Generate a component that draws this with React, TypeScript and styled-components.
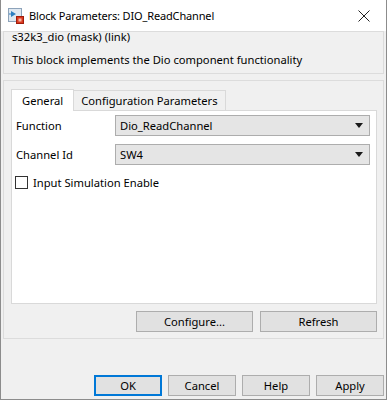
import React from 'react';
import styled, { createGlobalStyle } from 'styled-components';

const Global = createGlobalStyle`
  html, body {
    margin: 0;
    padding: 0;
    background: #ffffff;
  }
  body {
    font-family: "Noto Sans", "Open Sans", sans-serif;
    font-size: 11.2px;
    color: #000;
  }
`;

const Window = styled.div`
  box-sizing: border-box;
  width: 387px;
  height: 400px;
  display: flex;
  flex-direction: column;
  border: 1px solid #8c8c8c;
  border-top: none;
  background: #f0f0f0;
`;

const TitleBar = styled.div`
  height: 31px;
  flex: none;
  display: flex;
  align-items: center;
  background: #ffffff;
  padding-left: 7px;
  .title {
    margin-left: 5px;
    flex: 1;
    white-space: nowrap;
    font-size: 11px;
    letter-spacing: -0.15px;
  }
`;

const CloseBox = styled.div`
  width: 44px;
  height: 31px;
  display: flex;
  align-items: center;
  justify-content: center;
`;

const Content = styled.div`
  flex: 1;
  display: flex;
  flex-direction: column;
  padding: 0 2px;
`;

const DescGroup = styled.div`
  border: 1px solid #dcdcdc;
  padding: 0 8px 6px;
  .name {
    line-height: 14px;
    margin-top: -2px;
  }
  .desc {
    line-height: 14px;
    margin-top: 9px;
  }
`;

const ParamGroup = styled.div`
  margin-top: 6px;
  border: 1px solid #dcdcdc;
  padding: 8px 6px 6px 7px;
`;

const TabStrip = styled.div`
  display: flex;
  align-items: flex-end;
  height: 21px;
`;

const Tab = styled.div<{ $active?: boolean }>`
  box-sizing: border-box;
  height: ${(p) => (p.$active ? 22 : 20)}px;
  padding: 0 ${(p) => (p.$active ? 10 : 7)}px;
  display: flex;
  align-items: center;
  border: 1px solid #d9d9d9;
  border-bottom: none;
  background: ${(p) => (p.$active ? '#ffffff' : '#f0f0f0')};
  margin-bottom: ${(p) => (p.$active ? -1 : 0)}px;
  position: relative;
  z-index: ${(p) => (p.$active ? 1 : 0)};
  white-space: nowrap;
  & + & {
    margin-left: -1px;
  }
`;

const Panel = styled.div`
  box-sizing: border-box;
  height: 194px;
  border: 1px solid #d9d9d9;
  background: #ffffff;
  padding: 4px 6px 0 4px;
`;

const FieldGrid = styled.div`
  display: grid;
  grid-template-columns: 99px 1fr;
  row-gap: 8px;
  align-items: center;
`;

const Dropdown = styled.div`
  box-sizing: border-box;
  height: 21px;
  display: flex;
  align-items: center;
  padding: 0 6px 0 4px;
  border: 1px solid #adadad;
  background: #e5e5e5;
  .value {
    flex: 1;
  }
`;

const Caret = styled.span`
  width: 0;
  height: 0;
  border-left: 4px solid transparent;
  border-right: 4px solid transparent;
  border-top: 5px solid #1a1a1a;
`;

const CheckRow = styled.label`
  display: flex;
  align-items: center;
  gap: 5px;
  margin-top: 10px;
  margin-left: -1px;
`;

const CheckBox = styled.span`
  box-sizing: border-box;
  width: 13px;
  height: 13px;
  border: 1px solid #333333;
  background: #ffffff;
`;

const ButtonRow = styled.div<{ $gap: number }>`
  display: flex;
  justify-content: flex-end;
  gap: ${(p) => p.$gap}px;
`;

const Button = styled.div<{ $width: number; $focused?: boolean }>`
  box-sizing: border-box;
  width: ${(p) => p.$width}px;
  height: 21px;
  display: flex;
  align-items: center;
  justify-content: center;
  background: #e1e1e1;
  border: ${(p) => (p.$focused ? '2px solid #0078d7' : '1px solid #adadad')};
`;

const InnerButtons = styled(ButtonRow)`
  margin-top: 7px;
`;

const Footer = styled(ButtonRow)`
  flex: 1;
  align-items: flex-end;
  padding-bottom: 3px;
`;

function BlockIcon() {
  return (
    <svg width="16" height="16" viewBox="0 0 16 16">
      <rect x="0.5" y="0.5" width="13" height="13" fill="#dfe8f1" stroke="#8da3ba" />
      <path d="M3 3 L8 6 L3 9 Z" fill="#2d7fc1" />
      <path d="M1 6 H3" stroke="#2d7fc1" strokeWidth="1.2" />
      <rect x="8.5" y="8.5" width="7" height="7" fill="#d9381e" stroke="#a01d0c" />
      <rect x="10.5" y="10.5" width="3" height="3" fill="#f5b7a8" />
    </svg>
  );
}

function CloseIcon() {
  return (
    <svg width="12" height="12" viewBox="0 0 12 12">
      <path d="M0.5 0.5 L11.5 11.5 M11.5 0.5 L0.5 11.5" stroke="#222" strokeWidth="1" />
    </svg>
  );
}

export default function App() {
  return (
    <>
      <Global />
      <Window>
        <TitleBar>
          <BlockIcon />
          <span className="title">Block Parameters: DIO_ReadChannel</span>
          <CloseBox>
            <CloseIcon />
          </CloseBox>
        </TitleBar>
        <Content>
          <DescGroup>
            <div className="name">s32k3_dio (mask) (link)</div>
            <div className="desc">This block implements the Dio component functionality</div>
          </DescGroup>
          <ParamGroup>
            <TabStrip>
              <Tab $active>General</Tab>
              <Tab>Configuration Parameters</Tab>
            </TabStrip>
            <Panel>
              <FieldGrid>
                <span>Function</span>
                <Dropdown>
                  <span className="value">Dio_ReadChannel</span>
                  <Caret />
                </Dropdown>
                <span>Channel Id</span>
                <Dropdown>
                  <span className="value">SW4</span>
                  <Caret />
                </Dropdown>
              </FieldGrid>
              <CheckRow>
                <CheckBox />
                <span>Input Simulation Enable</span>
              </CheckRow>
            </Panel>
            <InnerButtons $gap={7}>
              <Button $width={117}>Configure...</Button>
              <Button $width={117}>Refresh</Button>
            </InnerButtons>
          </ParamGroup>
          <Footer $gap={6}>
            <Button $width={68} $focused>OK</Button>
            <Button $width={68}>Cancel</Button>
            <Button $width={68}>Help</Button>
            <Button $width={68}>Apply</Button>
          </Footer>
        </Content>
      </Window>
    </>
  );
}
